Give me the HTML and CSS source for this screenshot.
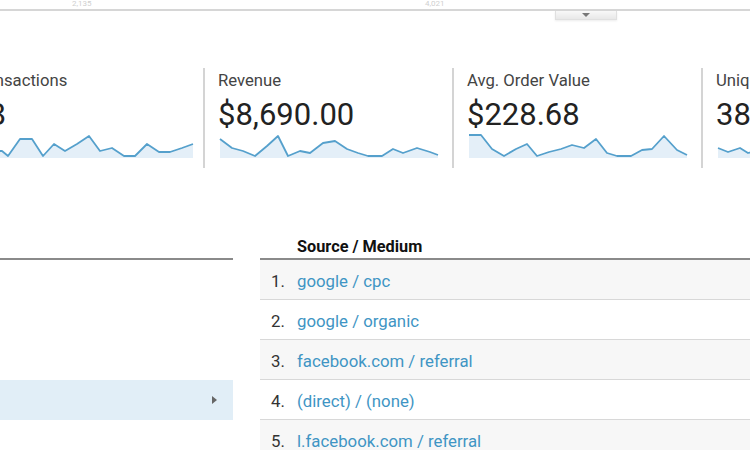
FILE: index.html
```html
<!DOCTYPE html>
<html>
<head>
  <title>Ecommerce Overview</title>
  <meta name="viewport" content="width=device-width, initial-scale=1.0">
  <link rel="stylesheet" href="styles.css">
</head>
<body>
  <div class="top-strip">
    <div class="top-cell first"><span class="t-val">Users</span><span class="t-sub">2,135</span></div>
    <div class="top-cell"><span class="t-val">Users</span><span class="t-sub">4,021</span></div>
  </div>
  <div class="tab-row">
    <div class="tab"><span class="tab-arrow"></span></div>
  </div>

  <div class="metrics">
    <div class="metric first">
      <div class="metric-label">Transactions</div>
      <div class="metric-value">38</div>
      <svg class="spark" viewBox="0 0 220 25" width="220" height="25">
        <polygon class="spark-fill" points="0,14 12,9 23,18 29,18 35,23 47,6 59,6 70,23 81,11 92,18 104,11 116,3 127,18 139,15 151,23 162,23 174,11 186,19 197,19 209,15 220,11 220,25 0,25"/>
        <polyline class="spark-line" points="0,14 12,9 23,18 29,18 35,23 47,6 59,6 70,23 81,11 92,18 104,11 116,3 127,18 139,15 151,23 162,23 174,11 186,19 197,19 209,15 220,11"/>
      </svg>
    </div>
    <div class="metric">
      <div class="metric-label">Revenue</div>
      <div class="metric-value">$8,690.00</div>
      <svg class="spark" viewBox="0 0 220 25" width="220" height="25">
        <polygon class="spark-fill" points="0,6 12,15 23,18 35,23 47,13 58,3 68,23 80,18 90,20 103,10 115,8 127,16 138,20 148,23 162,23 173,16 183,20 197,15 210,19 218,22 218,25 0,25"/>
        <polyline class="spark-line" points="0,6 12,15 23,18 35,23 47,13 58,3 68,23 80,18 90,20 103,10 115,8 127,16 138,20 148,23 162,23 173,16 183,20 197,15 210,19 218,22"/>
      </svg>
    </div>
    <div class="metric">
      <div class="metric-label">Avg. Order Value</div>
      <div class="metric-value">$228.68</div>
      <svg class="spark" viewBox="0 0 220 25" width="220" height="25">
        <polygon class="spark-fill" points="0,2 12,2 23,16 35,23 47,16 58,11 68,23 80,19 92,16 103,12 115,15 127,6 138,20 148,23 162,23 173,17 183,16 195,3 208,17 218,22 218,25 0,25"/>
        <polyline class="spark-line" points="0,2 12,2 23,16 35,23 47,16 58,11 68,23 80,19 92,16 103,12 115,15 127,6 138,20 148,23 162,23 173,17 183,16 195,3 208,17 218,22"/>
      </svg>
    </div>
    <div class="metric">
      <div class="metric-label">Unique Purchases</div>
      <div class="metric-value">38</div>
      <svg class="spark" viewBox="0 0 220 25" width="220" height="25">
        <polygon class="spark-fill" points="0,15 10,19 22,15 30,20 42,17 55,22 68,14 80,18 95,12 110,20 125,16 140,22 155,10 170,18 185,15 200,20 218,14 218,25 0,25"/>
        <polyline class="spark-line" points="0,15 10,19 22,15 30,20 42,17 55,22 68,14 80,18 95,12 110,20 125,16 140,22 155,10 170,18 185,15 200,20 218,14"/>
      </svg>
    </div>
  </div>

  <div class="lower">
    <div class="side">
      <div class="side-head"></div>
      <div class="side-item"></div>
      <div class="side-item"></div>
      <div class="side-item"></div>
      <div class="side-item active"><span class="side-arrow"></span></div>
      <div class="side-item"></div>
    </div>
    <div class="table">
      <div class="table-head">Source / Medium</div>
      <div class="row"><span class="num">1.</span><a href="#">google / cpc</a></div>
      <div class="row"><span class="num">2.</span><a href="#">google / organic</a></div>
      <div class="row"><span class="num">3.</span><a href="#">facebook.com / referral</a></div>
      <div class="row"><span class="num">4.</span><a href="#">(direct) / (none)</a></div>
      <div class="row"><span class="num">5.</span><a href="#">l.facebook.com / referral</a></div>
    </div>
  </div>
</body>
</html>
```

FILE: styles.css
```css
body {
  font-family: Roboto, 'Liberation Sans', sans-serif;
  background-color: #ffffff;
  color: #222;
  margin: 0;
  width: 750px;
  height: 450px;
  overflow: hidden;
}
.top-strip {
  display: flex;
  align-items: flex-end;
  height: 9px;
  overflow: hidden;
  border-bottom: 2px solid #d6d6d6;
}
.top-cell {
  display: flex;
  flex-direction: column;
  width: 353px;
  flex-shrink: 0;
}
.top-cell.first {
  padding-left: 72px;
}
.t-val {
  font-size: 13px;
  line-height: 14px;
  color: #333;
}
.t-sub {
  font-size: 8px;
  line-height: 8px;
  color: #cfcfcf;
  padding-bottom: 1px;
}
.tab-row {
  display: flex;
  height: 9px;
}
.tab {
  margin-left: 555px;
  width: 62px;
  height: 9px;
  background: linear-gradient(#f8f8f8, #e8e8e8);
  border: 1px solid #e0e0e0;
  border-top: none;
  box-shadow: 0 1px 2px rgba(0, 0, 0, 0.08);
  display: flex;
  justify-content: center;
  padding-top: 2px;
  box-sizing: border-box;
}
.tab-arrow {
  width: 0;
  height: 0;
  border-left: 4px solid transparent;
  border-right: 4px solid transparent;
  border-top: 4px solid #777;
}
.metrics {
  display: flex;
  margin-top: 48px;
  margin-left: -44px;
}
.metric {
  width: 249px;
  height: 100px;
  flex-shrink: 0;
  box-sizing: border-box;
  border-left: 2px solid #d4d4d4;
  padding: 3px 0 0 13px;
}
.metric.first {
  width: 247px;
}
.metric-label {
  font-size: 16.7px;
  line-height: 20px;
  color: #444;
}
.metric-value {
  font-size: 31px;
  line-height: 36px;
  margin-top: 6px;
  color: #222;
}
.spark {
  display: block;
  margin-left: 2px;
  overflow: visible;
}
.spark-fill {
  fill: #e4eff8;
}
.spark-line {
  fill: none;
  stroke: #55a0cc;
  stroke-width: 1.8;
  stroke-linejoin: round;
}
.lower {
  display: flex;
  gap: 27px;
  margin-top: 64px;
}
.side {
  width: 233px;
  flex-shrink: 0;
}
.side-head {
  height: 26px;
  border-bottom: 2px solid #8a8a8a;
}
.side-item {
  height: 40px;
  display: flex;
  align-items: center;
  justify-content: flex-end;
  padding-right: 16px;
}
.side-item.active {
  background-color: #e1eef7;
}
.side-arrow {
  width: 0;
  height: 0;
  border-top: 4px solid transparent;
  border-bottom: 4px solid transparent;
  border-left: 5px solid #666;
}
.table {
  flex: 1;
}
.table-head {
  height: 28px;
  box-sizing: border-box;
  padding: 6px 0 0 37px;
  font-size: 16.3px;
  line-height: 18px;
  font-weight: bold;
  color: #111;
  border-bottom: 2px solid #8a8a8a;
}
.row {
  height: 40px;
  box-sizing: border-box;
  padding: 3px 0 0 11px;
  font-size: 16.8px;
  line-height: 36px;
  border-bottom: 1px solid #d8d8d8;
  display: flex;
}
.row:nth-child(even) {
  background-color: #f7f7f7;
}
.num {
  width: 26px;
  color: #333;
}
a {
  color: #3f95c4;
  text-decoration: none;
}
```
